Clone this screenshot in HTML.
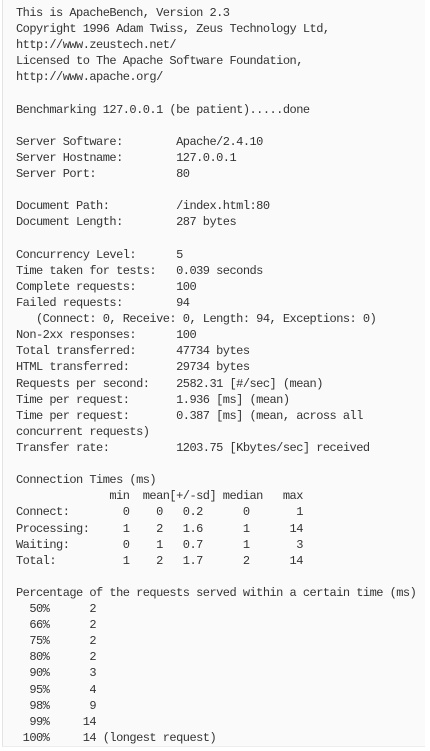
<!DOCTYPE html>
<html><head><meta charset="utf-8"><style>
html,body{margin:0;padding:0;background:#fff;width:430px;height:751px;overflow:hidden}
pre{position:absolute;left:2px;top:0;width:423px;height:747px;margin:0;box-sizing:border-box;background:#fafafa;border-left:1px solid #e4e4e4;border-bottom:1px solid #eee;padding:5px 0 0 13px;font-family:"Liberation Mono",monospace;font-size:12px;letter-spacing:-0.53px;line-height:16.11px;color:#333;white-space:pre;overflow:hidden}
</style></head><body><pre>This is ApacheBench, Version 2.3
Copyright 1996 Adam Twiss, Zeus Technology Ltd,
http://www.zeustech.net/
Licensed to The Apache Software Foundation,
http://www.apache.org/

Benchmarking 127.0.0.1 (be patient).....done

Server Software:        Apache/2.4.10
Server Hostname:        127.0.0.1
Server Port:            80

Document Path:          /index.html:80
Document Length:        287 bytes

Concurrency Level:      5
Time taken for tests:   0.039 seconds
Complete requests:      100
Failed requests:        94
   (Connect: 0, Receive: 0, Length: 94, Exceptions: 0)
Non-2xx responses:      100
Total transferred:      47734 bytes
HTML transferred:       29734 bytes
Requests per second:    2582.31 [#/sec] (mean)
Time per request:       1.936 [ms] (mean)
Time per request:       0.387 [ms] (mean, across all
concurrent requests)
Transfer rate:          1203.75 [Kbytes/sec] received

Connection Times (ms)
              min  mean[+/-sd] median   max
Connect:        0    0   0.2      0       1
Processing:     1    2   1.6      1      14
Waiting:        0    1   0.7      1       3
Total:          1    2   1.7      2      14

Percentage of the requests served within a certain time (ms)
  50%      2
  66%      2
  75%      2
  80%      2
  90%      3
  95%      4
  98%      9
  99%     14
 100%     14 (longest request)</pre></body></html>
